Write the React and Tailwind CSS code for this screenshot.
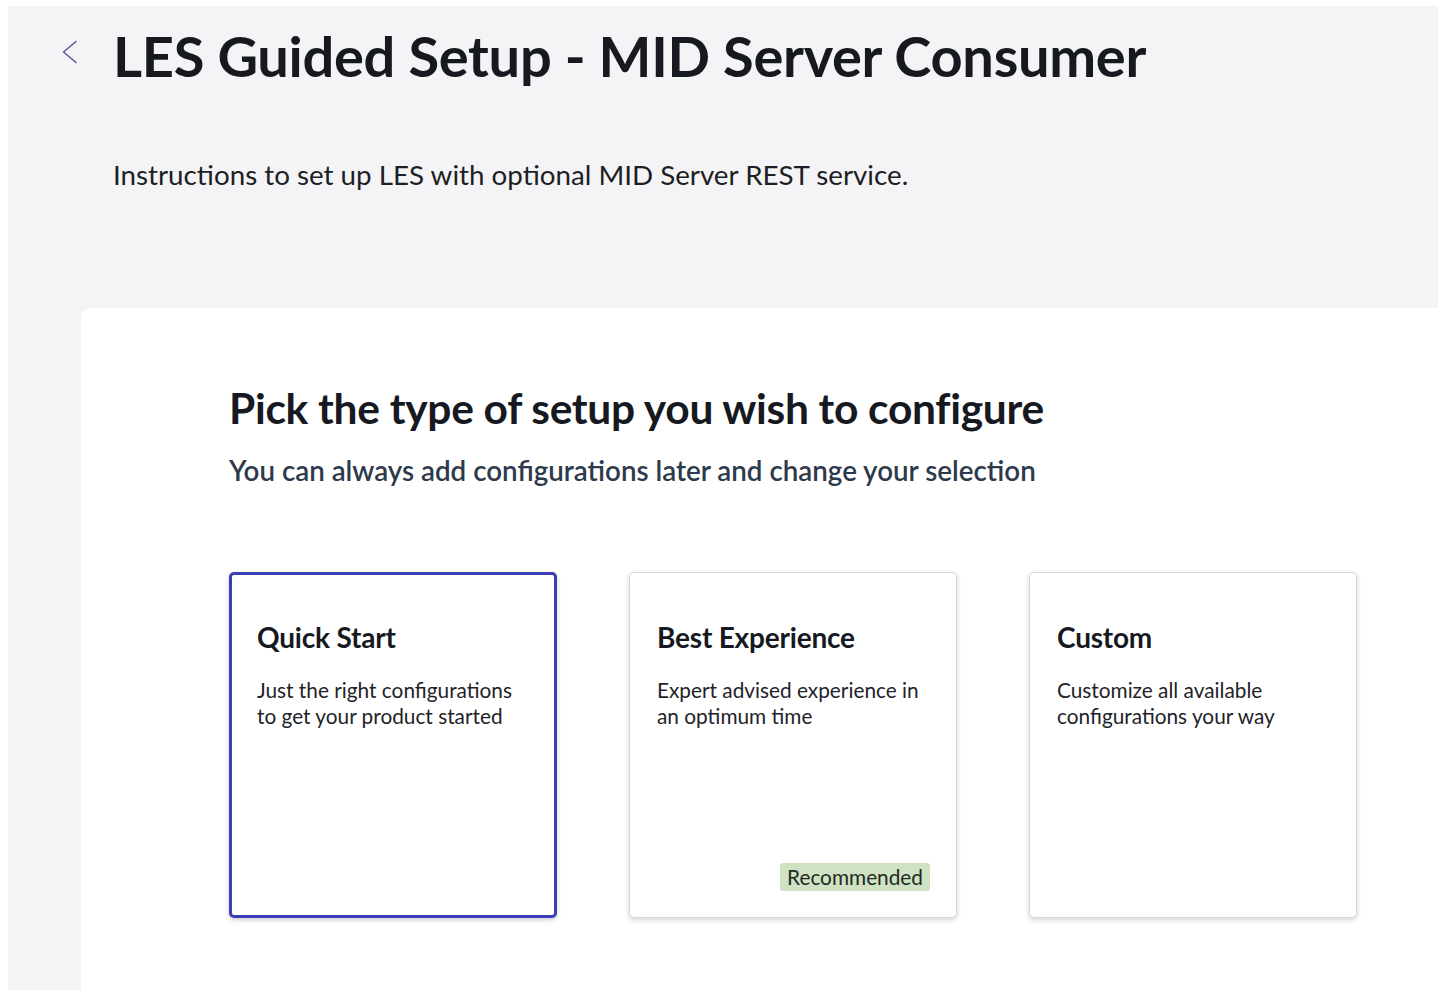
const SETUP_TYPES = [
  {
    id: 'quick',
    title: 'Quick Start',
    lines: ['Just the right configurations', 'to get your product started'],
    selected: true,
  },
  {
    id: 'best',
    title: 'Best Experience',
    lines: ['Expert advised experience in', 'an optimum time'],
    badge: 'Recommended',
  },
  {
    id: 'custom',
    title: 'Custom',
    lines: ['Customize all available', 'configurations your way'],
  },
]

function BackChevron() {
  return (
    <svg width="16" height="24" viewBox="0 0 16 24" fill="none">
      <path d="M14 1.5 1.5 12 14 22.5" stroke="currentColor" strokeWidth="1.6" strokeLinecap="round" strokeLinejoin="round" />
    </svg>
  )
}

function SetupCard({ item }) {
  return (
    <div
      className={
        item.selected
          ? 'relative w-[328px] h-[346px] rounded-[5px] bg-white border-[3px] border-[#3b3fb3] shadow-[0_2px_4px_rgba(60,60,90,0.25)] pl-[25px] pt-[44px]'
          : 'relative w-[328px] h-[346px] rounded-[5px] bg-white border border-[#d4d6dc] shadow-[0_2px_5px_rgba(60,60,90,0.22)] pl-[27px] pt-[46px]'
      }
    >
      <h3 className="text-[28px] leading-[36px] font-bold text-[#16191f] tracking-[-0.2px]">{item.title}</h3>
      <p className="mt-[22px] text-[20.8px] leading-[26px] text-[#1f2329]">
        {item.lines.map(l => (
          <span key={l} className="block">{l}</span>
        ))}
      </p>
      {item.badge && (
        <span className="absolute right-[26px] bottom-[26px] h-[28px] px-[7px] rounded-[3px] bg-[#cfe2c4] text-[20.8px] leading-[28px] text-[#1f2a22]">
          {item.badge}
        </span>
      )}
    </div>
  )
}

export default function App() {
  return (
    <div className="h-[1002px] bg-white pl-2 pt-[6px] overflow-hidden" style={{ fontFamily: 'Lato, "Noto Sans", sans-serif' }}>
      <div className="h-[984px] bg-[#f4f4f6] flex flex-col">
        {/* page header */}
        <div className="flex items-start pl-[54px] pt-[16px]">
          <button className="mt-[18px] text-[#565aa6]">
            <BackChevron />
          </button>
          <div className="ml-[35px]">
            <h1 className="text-[56px] leading-[68px] font-bold text-[#16191f] tracking-[-0.3px]">
              LES Guided Setup - MID Server Consumer
            </h1>
            <p className="mt-[68px] text-[27.75px] leading-[34px] text-[#1c1f24]">
              Instructions to set up LES with optional MID Server REST service.
            </p>
          </div>
        </div>

        {/* setup picker panel */}
        <div className="flex-1 ml-[73px] mt-[116px] bg-white rounded-tl-[10px] pl-[148px] pt-[74px]">
          <h2 className="text-[42.5px] leading-[52px] font-bold text-[#16191f] tracking-[-0.3px]">
            Pick the type of setup you wish to configure
          </h2>
          <p className="mt-[20px] text-[27.75px] leading-[34px] font-semibold text-[#2d3a4b]">
            You can always add configurations later and change your selection
          </p>
          <div className="flex gap-[72px] mt-[84px]">
            {SETUP_TYPES.map(item => (
              <SetupCard key={item.id} item={item} />
            ))}
          </div>
        </div>
      </div>
    </div>
  )
}
